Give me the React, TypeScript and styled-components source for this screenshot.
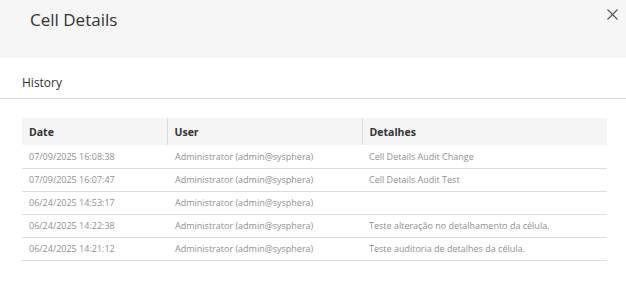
import React from 'react';
import styled, { createGlobalStyle } from 'styled-components';

const GlobalStyle = createGlobalStyle`
  * {
    box-sizing: border-box;
  }
  body {
    margin: 0;
    background: #ffffff;
    font-family: 'Open Sans', 'Liberation Sans', sans-serif;
  }
`;

const Modal = styled.div`
  width: 626px;
  height: 282px;
  background: #ffffff;
  overflow: hidden;
`;

const ModalHeader = styled.header`
  height: 58px;
  background-color: #f6f6f6;
  display: flex;
  justify-content: space-between;
  align-items: flex-start;
  padding: 8px 8px 0 30px;
`;

const Title = styled.h1`
  margin: 0;
  font-size: 17px;
  line-height: 24px;
  font-weight: 400;
  color: #333333;
`;

const CloseButton = styled.button`
  width: 12px;
  height: 12px;
  padding: 0;
  border: none;
  background: transparent;
  cursor: pointer;
  display: flex;
  align-items: center;
  justify-content: center;

  svg {
    display: block;
  }
`;

const SectionTitle = styled.div`
  padding: 16px 22px 7px;
  font-size: 12px;
  line-height: 17px;
  color: #333333;
  border-bottom: 1px solid #dddddd;
`;

const Table = styled.table`
  margin: 19px 19px 0 22px;
  width: 585px;
  border-collapse: collapse;
  table-layout: fixed;
`;

const HeadCell = styled.th<{ $width: number; $divider?: boolean }>`
  width: ${(props) => props.$width}px;
  height: 27px;
  padding: 0 7px;
  text-align: left;
  font-size: 10.5px;
  font-weight: 700;
  color: #333333;
  background-color: #f5f5f5;
  border-left: ${(props) => (props.$divider ? '1px solid #dcdcdc' : 'none')};
`;

const Row = styled.tr`
  border-bottom: 1px solid #dddddd;
`;

const Cell = styled.td<{ $pad?: number }>`
  height: 23px;
  padding: 0 7px 0 ${(props) => props.$pad ?? 7}px;
  font-size: 9px;
  color: #919191;
  white-space: nowrap;
  overflow: hidden;
`;

const CloseIcon = () => (
  <svg width="11" height="11" viewBox="0 0 11 11">
    <path d="M0.5 0.5 L10.5 10.5 M10.5 0.5 L0.5 10.5" stroke="#555555" strokeWidth="1.1" fill="none" />
  </svg>
);

const history = [
  { date: '07/09/2025 16:08:38', user: 'Administrator (admin@sysphera)', details: 'Cell Details Audit Change' },
  { date: '07/09/2025 16:07:47', user: 'Administrator (admin@sysphera)', details: 'Cell Details Audit Test' },
  { date: '06/24/2025 14:53:17', user: 'Administrator (admin@sysphera)', details: '' },
  { date: '06/24/2025 14:22:38', user: 'Administrator (admin@sysphera)', details: 'Teste alteração no detalhamento da célula.' },
  { date: '06/24/2025 14:21:12', user: 'Administrator (admin@sysphera)', details: 'Teste auditoria de detalhes da célula.' },
];

const App = () => {
  return (
    <>
      <GlobalStyle />
      <Modal>
        <ModalHeader>
          <Title>Cell Details</Title>
          <CloseButton aria-label="Close">
            <CloseIcon />
          </CloseButton>
        </ModalHeader>
        <SectionTitle>History</SectionTitle>
        <Table>
          <thead>
            <tr>
              <HeadCell $width={145}>Date</HeadCell>
              <HeadCell $width={195} $divider>User</HeadCell>
              <HeadCell $width={245} $divider>Detalhes</HeadCell>
            </tr>
          </thead>
          <tbody>
            {history.map((item) => (
              <Row key={item.date}>
                <Cell>{item.date}</Cell>
                <Cell $pad={8}>{item.user}</Cell>
                <Cell>{item.details}</Cell>
              </Row>
            ))}
          </tbody>
        </Table>
      </Modal>
    </>
  );
};

export default App;
